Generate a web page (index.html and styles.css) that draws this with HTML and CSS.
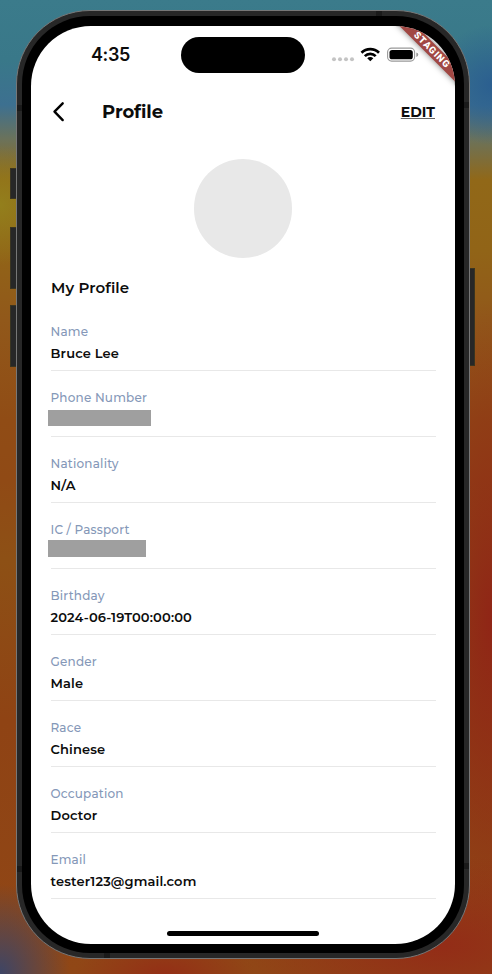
FILE: index.html
```html
<!DOCTYPE html>
<html lang="en">
<head>
<meta charset="utf-8">
<title>Profile</title>
<link rel="stylesheet" href="styles.css">
</head>
<body>
<div class="phone">
  <span class="key key-action"></span>
  <span class="key key-up"></span>
  <span class="key key-down"></span>
  <span class="key key-power"></span>
  <span class="seam seam-top"></span>
  <span class="seam seam-bottom"></span>
  <span class="seam seam-lt"></span>
  <span class="seam seam-lb"></span>
  <span class="seam seam-rt"></span>
  <span class="seam seam-rb"></span>
  <div class="bezel">
    <main class="screen">
      <div class="banner">STAGING</div>
      <div class="status">
        <span class="time">4:35</span>
        <span class="island"></span>
        <svg class="indicators" width="88" height="18" viewBox="0 0 88 18">
          <g fill="#c4c4c4"><circle cx="3" cy="13.3" r="2"/><circle cx="9" cy="13.3" r="2"/><circle cx="15" cy="13.3" r="2"/><circle cx="21" cy="13.3" r="2"/></g>
          <g fill="none" stroke="#000" stroke-width="2.7"><path d="M30.5 6.7a12.4 12.4 0 0 1 17.5 0"/><path d="M33.8 10.1a7.7 7.7 0 0 1 10.9 0"/></g>
          <path d="M36.2 12.2a4.3 4.3 0 0 1 6.1 0l-3 3.1z"/>
          <rect x="56.6" y="2.1" width="27" height="13" rx="4" fill="none" stroke="#999" stroke-width="1.1"/>
          <rect x="58.5" y="4" width="23.3" height="9.3" rx="2.6"/>
          <path d="M85.3 6.5q2 .6 2 2.2t-2 2.2z" fill="#999"/>
        </svg>
      </div>
      <header class="bar">
        <svg class="back" width="14" height="22" viewBox="0 0 14 22"><path d="M10.7 2.3 2.5 10.6l8.2 8.5" fill="none" stroke="#000" stroke-width="2.4" stroke-linecap="round" stroke-linejoin="round"/></svg>
        <h1>Profile</h1>
        <a class="edit">EDIT</a>
      </header>
      <div class="avatar"></div>
      <h2>My Profile</h2>
      <dl class="fields">
        <div class="field"><dt>Name</dt><dd>Bruce Lee</dd></div>
        <div class="field"><dt>Phone Number</dt><dd class="redacted phone-mask"></dd></div>
        <div class="field"><dt>Nationality</dt><dd>N/A</dd></div>
        <div class="field"><dt>IC / Passport</dt><dd class="redacted id-mask"></dd></div>
        <div class="field"><dt>Birthday</dt><dd>2024-06-19T00:00:00</dd></div>
        <div class="field"><dt>Gender</dt><dd>Male</dd></div>
        <div class="field"><dt>Race</dt><dd>Chinese</dd></div>
        <div class="field"><dt>Occupation</dt><dd>Doctor</dd></div>
        <div class="field"><dt>Email</dt><dd>tester123@gmail.com</dd></div>
      </dl>
      <div class="home"></div>
    </main>
  </div>
</div>
</body>
</html>
```
FILE: styles.css
```css
* { box-sizing: border-box; margin: 0; padding: 0; }
body {
  width: 492px;
  height: 974px;
  padding: 10px 22px 15px 16px;
  overflow: hidden;
  font-family: Montserrat, Inter, sans-serif;
  color: #0c0c0c;
  background:
    radial-gradient(ellipse 70px 90px at 0 974px, #3d4566 0%, #3d456600 100%),
    radial-gradient(ellipse 90px 320px at 492px 620px, #902516 0%, #90251600 100%),
    radial-gradient(ellipse 200px 90px at 440px 945px, #932c17 0%, #932c1700 100%),
    radial-gradient(ellipse 90px 40px at 165px 974px, #942f16 0%, #942f1600 100%),
    radial-gradient(ellipse 60px 60px at 492px 85px, #2b5f90 0%, #2b5f9000 100%),
    radial-gradient(ellipse 60px 60px at 0 205px, #937f1c 0%, #937f1c00 100%),
    linear-gradient(#3b7b8b 0, #397889 60px, #3d7090 105px, #6c7259 140px, #916818 180px, #916417 250px, #91581a 320px, #904c15 420px, #904a15 480px, #8d5015 560px, #8f4314 720px, #904716 974px);
}
.phone {
  position: relative;
  height: 949px;
  padding: 5px;
  border: 1px solid #777;
  border-radius: 74px;
  background: #272727;
}
.bezel {
  height: 937px;
  padding: 10px 9px 9px;
  border-radius: 68px;
  background: #000;
}
.screen {
  position: relative;
  height: 918px;
  overflow: hidden;
  border-radius: 60px;
  background: #fff;
}
.key { position: absolute; width: 6px; background: #272727; border: 1px solid #3a3420; border-width: 1px 0 1px 1px; }
.key-action { left: -7px; top: 157px; height: 31px; }
.key-up { left: -7px; top: 216px; height: 62px; }
.key-down { left: -7px; top: 294px; height: 62px; }
.key-power { right: -6px; top: 257px; height: 98px; width: 5px; border-width: 1px 1px 1px 0; }
.seam { position: absolute; background: #1a1a1a; }
.seam-top { top: 0; left: 359px; width: 6px; height: 5px; }
.seam-bottom { bottom: 0; left: 87px; width: 6px; height: 5px; }
.seam-lt { left: 0; top: 94px; width: 5px; height: 6px; }
.seam-lb { left: 0; bottom: 86px; width: 5px; height: 6px; }
.seam-rt { right: 0; top: 91px; width: 5px; height: 6px; }
.seam-rb { right: 0; bottom: 89px; width: 5px; height: 6px; }
.banner {
  position: absolute;
  left: 340.5px;
  top: 17.5px;
  width: 120px;
  height: 12px;
  transform: rotate(45deg);
  background: #a14743;
  box-shadow: 0 0 6px rgba(0, 0, 0, .5);
  color: #fff;
  font: 900 9.5px/12px Roboto, sans-serif;
  letter-spacing: 1px;
  text-align: center;
}
.status { display: flex; padding: 11px 0 0 60px; height: 59px; }
.time { flex: none; width: 90px; font: 600 18px/36px Inter, sans-serif; letter-spacing: -.4px; }
.island { flex: none; width: 124px; height: 36px; border-radius: 18px; background: #000; }
.indicators { margin: 9px 0 0 26px; flex: none; }
.bar { display: flex; align-items: center; height: 54px; padding: 0 20px 0 21px; }
h1 { margin-left: 36px; font-size: 18px; font-weight: 700; letter-spacing: -.1px; }
.edit { margin-left: auto; font-size: 14px; font-weight: 700; text-decoration: underline #666; text-underline-offset: 1px; text-decoration-thickness: 1px; }
.avatar { width: 98.5px; height: 98.5px; margin: 20px 0 0 162.6px; border-radius: 50%; background: #e8e8e8; }
h2 { margin: 20.5px 0 0 20px; font-size: 15px; line-height: 20px; font-weight: 600; letter-spacing: .1px; }
.fields { margin: 7px 19.5px 0 19.5px; }
.field { height: 66px; padding-top: 17px; border-bottom: 1px solid #e8e8e8; }
dt { line-height: 20px; font-size: 12px; font-weight: 500; color: #8598b8; letter-spacing: .2px; }
dd { line-height: 22px; font-size: 13px; font-weight: 600; letter-spacing: .15px; }
.redacted { margin-left: -3px; background: #9f9f9f; }
.phone-mask { width: 103px; height: 15.5px; margin-top: 2px; }
.id-mask { width: 98px; height: 17px; margin-top: .4px; }
.home { width: 152px; height: 5px; margin: 32px 0 0 136px; border-radius: 3px; background: #000; }
```
